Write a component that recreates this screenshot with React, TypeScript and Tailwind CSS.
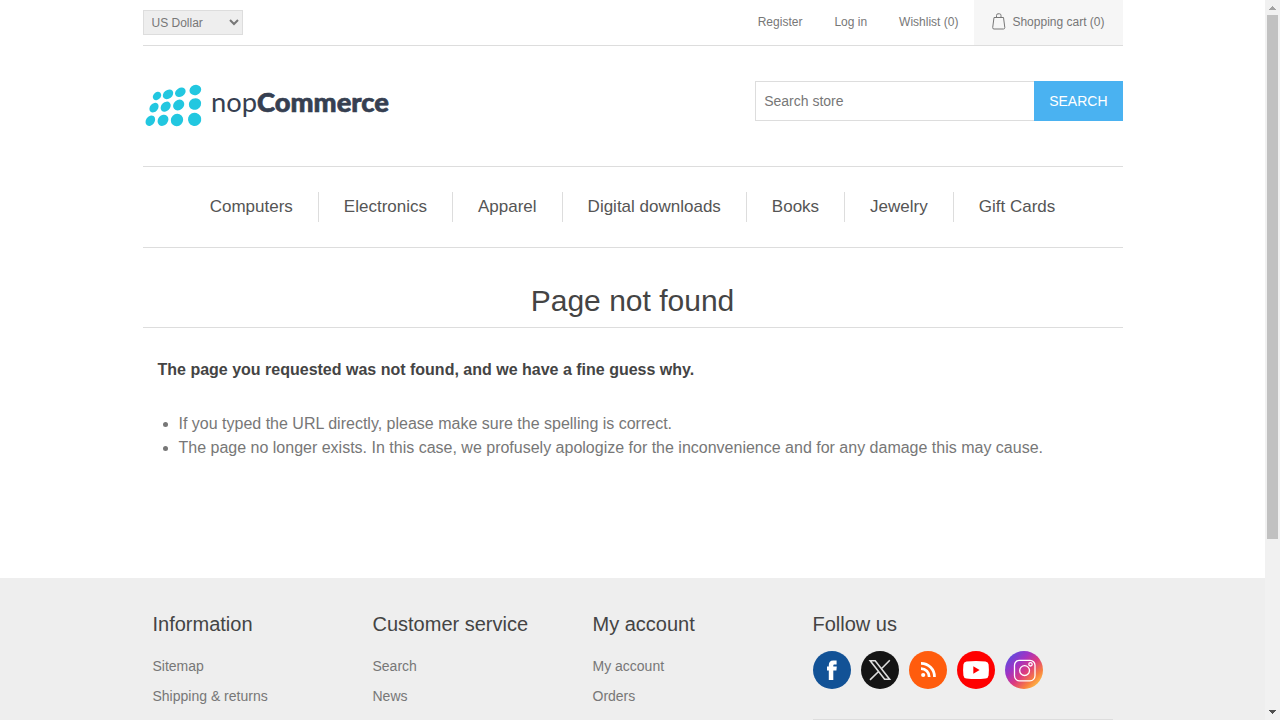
import { useState } from "react";

const dots = [
  [51, 60, 14, 11], [84, 55, 17, 13], [121, 49, 17, 13], [166, 42, 18, 15],
  [42, 95, 16, 12], [77, 92, 17, 13], [116, 87, 18, 15], [165, 84, 19, 17],
  [31, 134, 17, 13], [69, 133, 18, 15], [111, 132, 19, 18], [164, 130, 20, 20],
];
const tilts = [-45, -38, -32, -22, -50, -45, -40, -25, -55, -50, -45, -30];

function Logo() {
  return (
    <a href="/" aria-label="nopCommerce">
      <svg viewBox="9 0 750 180" className="h-[60px] w-[250px]">
        <g fill="#22c7e0">
          {dots.map(([cx, cy, rx, ry], i) => (
            <ellipse key={i} cx={cx} cy={cy} rx={rx} ry={ry} transform={`rotate(${tilts[i]} ${cx} ${cy})`} />
          ))}
        </g>
        <text x="213" y="108" fontSize="82" fill="#363f51" className="font-['Lato',sans-serif]">
          nop<tspan fontWeight="900" stroke="#363f51" strokeWidth="2">Commerce</tspan>
        </text>
      </svg>
    </a>
  );
}

function BagIcon() {
  return (
    <svg viewBox="0 0 14 17" className="h-[17px] w-[14px]" fill="none" stroke="#777" strokeWidth="1">
      <path d="M2 4.5h9.500l1.300 10q0 1.500-1.300 1.500H2q-1.500 0-1.300-1.500z" />
      <path d="M4.500 4.500V2.500Q4.500.8 6 .8h1.500Q9 .8 9 2.500v2" />
    </svg>
  );
}

const socials = [
  {
    name: "Facebook",
    art: (
      <>
        <circle cx="19" cy="19" r="19" fill="#125296" />
        <path fill="#fff" d="M15.8 29V19.600H14v-4h1.800v-1.400c0-2.900 1.500-4.600 4.400-4.600h3.400v3.900h-1.900c-1.100 0-1.400.5-1.400 1.300v.8h3.500l-.4 4h-3.100V29z" />
      </>
    ),
  },
  {
    name: "X",
    art: (
      <>
        <circle cx="19" cy="19" r="19" fill="#151515" />
        <path fill="none" stroke="#ddd" strokeWidth="1.6" d="M9.200 9.800h5l14.400 18.400h-5zM28.800 9.200l-8.400 8.600M17.600 20.500L9 28.800" />
      </>
    ),
  },
  {
    name: "RSS",
    art: (
      <>
        <circle cx="19" cy="19" r="19" fill="#ff5c0d" />
        <circle cx="14.2" cy="24" r="2.1" fill="#fff" />
        <path fill="none" stroke="#fff" strokeWidth="2.7" d="M12 17.6a8.2 8.2 0 0 1 8.2 8.3M12 12.3a13.4 13.4 0 0 1 13.5 13.6" />
      </>
    ),
  },
  {
    name: "YouTube",
    art: (
      <>
        <circle cx="19" cy="19" r="19" fill="#f00" />
        <path fill="#fff" d="M9.5 10.6q9.5-1 19 0 2.8.3 3.1 3 .6 5.4 0 10.8-.3 2.7-3.1 3-9.5 1-19 0-2.8-.3-3.1-3-.6-5.4 0-10.8.3-2.7 3.1-3z" />
        <path fill="#f00" d="M16.3 15.3v7.4l6.3-3.7z" />
      </>
    ),
  },
  {
    name: "Instagram",
    art: (
      <>
        <defs>
          <linearGradient id="insta" x1="0.1" y1="0.1" x2="0.9" y2="0.9">
            <stop offset="0" stopColor="#5a4de0" />
            <stop offset="0.3" stopColor="#a033c4" />
            <stop offset="0.55" stopColor="#dc3a80" />
            <stop offset="0.8" stopColor="#f98040" />
            <stop offset="1" stopColor="#fdc648" />
          </linearGradient>
        </defs>
        <circle cx="19" cy="19" r="19" fill="url(#insta)" />
        <g fill="none" stroke="#fff" strokeWidth="1.3">
          <rect x="9.5" y="9.3" width="20.5" height="20.5" rx="5" />
          <circle cx="19.6" cy="19.6" r="4.9" />
          <circle cx="25.5" cy="13.3" r="1.7" />
        </g>
      </>
    ),
  },
];

const columns = [
  { title: "Information", links: ["Sitemap", "Shipping & returns"] },
  { title: "Customer service", links: ["Search", "News"] },
  { title: "My account", links: ["My account", "Orders"] },
];

const categories = ["Computers", "Electronics", "Apparel", "Digital downloads", "Books", "Jewelry", "Gift Cards"];

function Header() {
  const [query, setQuery] = useState("");
  return (
    <header className="mx-auto w-full max-w-[980px]">
      <div className="flex h-[46px] items-center justify-between border-b border-[#ddd] text-xs text-[#777]">
        <select aria-label="Currency" defaultValue="usd" className="h-[25px] w-[100px] border border-[#ddd] bg-[#eee] px-1 text-xs text-[#777]">
          <option value="usd">US Dollar</option>
          <option value="eur">Euro</option>
        </select>
        <nav aria-label="Account" className="flex items-stretch self-stretch">
          <div className="flex items-center gap-8 pr-4 pb-[2px]">
            <a href="/register">Register</a>
            <a href="/login">Log in</a>
            <a href="/wishlist">Wishlist (0)</a>
          </div>
          <a href="/cart" className="flex items-center gap-[6px] bg-[#f6f6f6] px-[18px] pb-[2px]">
            <BagIcon />
            Shopping cart (0)
          </a>
        </nav>
      </div>
      <div className="flex h-[120px] items-center justify-between">
        <Logo />
        <form role="search" className="flex pb-[10px] text-sm" onSubmit={(e) => e.preventDefault()}>
          <input
            aria-label="Search store"
            placeholder="Search store"
            value={query}
            onChange={(e) => setQuery(e.target.value)}
            className="h-10 w-[279px] border border-r-0 border-[#ddd] px-2 text-[#777] placeholder:text-[#777]"
          />
          <button type="submit" className="h-10 bg-[#4ab2f1] px-[15px] text-white uppercase">Search</button>
        </form>
      </div>
      <nav aria-label="Categories" className="border-y border-[#ddd] py-[25px]">
        <ul className="flex justify-center divide-x divide-[#ddd] text-[17px] leading-[30px] text-[#555]">
          {categories.map((c) => (
            <li key={c} className="px-[25px]">
              <a href="#">{c}</a>
            </li>
          ))}
        </ul>
      </nav>
    </header>
  );
}

function Footer() {
  return (
    <footer className="bg-[#eee]">
      <div className="mx-auto flex max-w-[980px] px-[10px] pt-[34px]">
        {columns.map((col) => (
          <section key={col.title} className="w-[220px]">
            <h2 className="text-xl leading-6 text-[#444]">{col.title}</h2>
            <ul className="pt-[15px] text-sm leading-[30px] text-[#777]">
              {col.links.map((l) => (
                <li key={l}>
                  <a href="#">{l}</a>
                </li>
              ))}
            </ul>
          </section>
        ))}
        <section className="w-[300px]">
          <h2 className="text-xl leading-6 text-[#444]">Follow us</h2>
          <ul className="flex gap-[10px] border-b border-[#ddd] pt-[15px] pb-[30px]">
            {socials.map((s) => (
              <li key={s.name}>
                <a href="#" aria-label={s.name}>
                  <svg viewBox="0 0 38 38" className="size-[38px]">{s.art}</svg>
                </a>
              </li>
            ))}
          </ul>
        </section>
      </div>
    </footer>
  );
}

function ScrollTrack() {
  return (
    <div aria-hidden="true" className="flex w-[15px] shrink-0 flex-col bg-[#f1f1f1]">
      <svg viewBox="0 0 15 15" className="size-[15px] shrink-0" shapeRendering="crispEdges">
        <path fill="#a3a3a3" d="M7 6h1v1h1v1h1v1h1v1H4V9h1V8h1V7h1z" />
      </svg>
      <div className="flex-1 px-[2px]">
        <div className="h-[76%] bg-[#c1c1c1]" />
      </div>
      <svg viewBox="0 0 15 15" className="size-[15px] shrink-0" shapeRendering="crispEdges">
        <path fill="#505050" d="M4 5h7v1h-1v1H9v1H8v1H7V8H6V7H5V6H4z" />
      </svg>
    </div>
  );
}

export default function App() {
  return (
    <div className="flex h-screen bg-white font-['Liberation_Sans',Arial,sans-serif]">
      <div className="flex flex-1 flex-col overflow-hidden">
        <Header />
        <main className="mx-auto w-full max-w-[980px] grow pt-[30px] pb-[118px]">
          <h1 className="border-b border-[#ddd] pb-[3px] text-center text-3xl leading-[46px] text-[#444]">Page not found</h1>
          <div className="px-[15px] pt-[30px] leading-6 text-[#777]">
            <p className="font-bold text-[#444]">The page you requested was not found, and we have a fine guess why.</p>
            <ul className="list-disc pt-[30px] pl-[21px]">
              <li>If you typed the URL directly, please make sure the spelling is correct.</li>
              <li>The page no longer exists. In this case, we profusely apologize for the inconvenience and for any damage this may cause.</li>
            </ul>
          </div>
        </main>
        <Footer />
      </div>
      <ScrollTrack />
    </div>
  );
}
